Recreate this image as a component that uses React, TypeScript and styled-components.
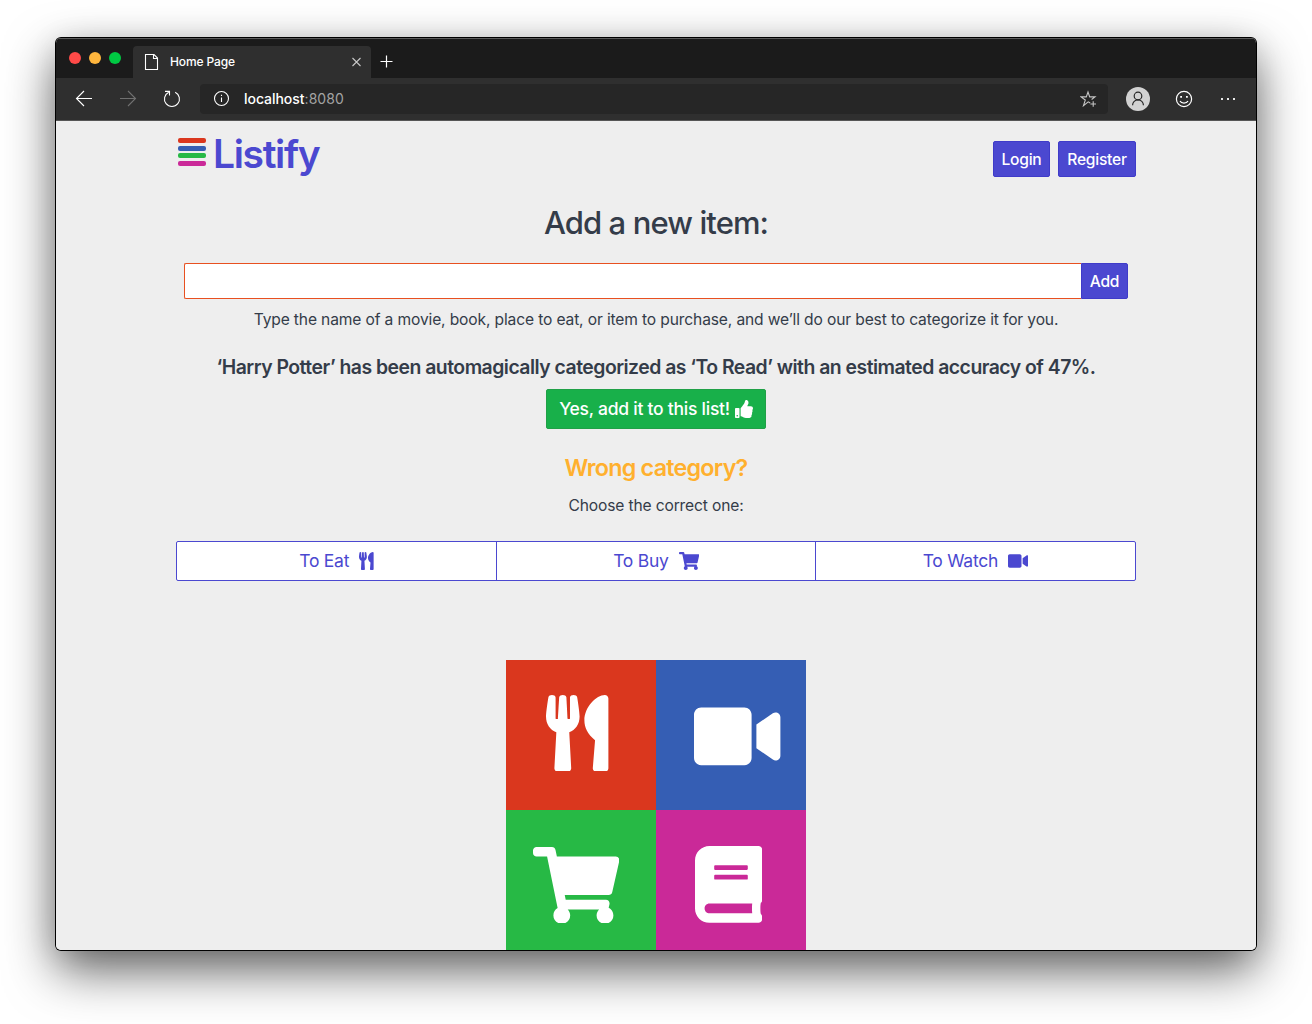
import React from "react";
import styled, { createGlobalStyle } from "styled-components";
import { FaUtensils, FaVideo, FaShoppingCart, FaBook, FaThumbsUp } from "react-icons/fa";

const GlobalStyle = createGlobalStyle`
  *, *::before, *::after { box-sizing: border-box; }
  body {
    margin: 0;
    background: #fff;
    overflow: hidden;
    font-family: Inter, "Liberation Sans", sans-serif;
    font-size: 16px;
    line-height: 24px;
    color: #343c49;
    -webkit-font-smoothing: antialiased;
  }
  h1, h2, h3, p { margin: 0; }
  button { font: inherit; margin: 0; }
  svg { display: block; flex: none; }
`;

const Desktop = styled.div`
  width: 1312px;
  height: 1024px;
  padding: 38px 56px 74px;
  overflow: hidden;
`;

const BrowserWindow = styled.div`
  width: 1200px;
  height: 912px;
  display: flex;
  flex-direction: column;
  overflow: hidden;
  border-radius: 5px;
  background: #eee;
  box-shadow: 0 0 0 1px #000, 0 20px 50px rgba(0, 0, 0, 0.62), 0 4px 30px rgba(0, 0, 0, 0.1);
`;

const TabStrip = styled.div`
  flex: none;
  height: 40px;
  display: flex;
  align-items: flex-end;
  background: #1b1b1b;
  border-top: 1px solid #5b5b5b;
`;

const TrafficLights = styled.div`
  width: 77px;
  height: 39px;
  padding: 13px 0 0 13px;
  display: flex;
  gap: 8px;
`;

const Light = styled.span<{ $color: string }>`
  width: 12px;
  height: 12px;
  border-radius: 50%;
  background: ${(p) => p.$color};
`;

const Tab = styled.div`
  width: 238px;
  height: 32px;
  padding: 0 8px 0 11px;
  display: flex;
  align-items: center;
  border-radius: 4px 4px 0 0;
  background: #2f2f2f;
  color: #fff;
`;

const TabTitle = styled.span`
  flex: 1;
  margin-left: 10px;
  font-size: 12px;
  line-height: 16px;
  font-weight: 500;
  letter-spacing: -0.12px;
`;

const NewTab = styled.span`
  margin: 0 0 10px 9px;
`;

const Toolbar = styled.div`
  flex: none;
  height: 43px;
  display: flex;
  align-items: center;
  padding-left: 19px;
  background: #2f2f2f;
  border-bottom: 1px solid #565656;
`;

const NavIcons = styled.div`
  width: 125px;
  display: flex;
  gap: 26px;
`;

const AddressBar = styled.div`
  width: 908px;
  height: 30px;
  padding: 0 10px 0 12px;
  display: flex;
  align-items: center;
  border-radius: 4px;
  background: #262626;
`;

const Address = styled.span`
  flex: 1;
  margin-left: 14px;
  color: #a3a3a3;
  font-size: 14px;
  line-height: 20px;
  letter-spacing: 0.08px;
`;

const Host = styled.span`
  color: #fff;
  font-weight: 500;
  letter-spacing: -0.04px;
`;

const ToolbarActions = styled.div`
  margin-left: 18px;
  display: flex;
  align-items: center;
  gap: 24px;
`;

const Page = styled.main`
  flex: 1;
  min-height: 0;
  overflow: hidden;
  padding: 0 120px;
  display: flex;
  flex-direction: column;
  align-items: center;
  background: #eee;
`;

const Header = styled.header`
  flex: none;
  align-self: stretch;
  display: flex;
  justify-content: space-between;
  height: 56px;
`;

const Brand = styled.div`
  display: flex;
  padding: 17px 0 0 2px;
`;

const Bars = styled.div`
  display: flex;
  flex-direction: column;
  gap: 2.67px;
  width: 28px;
`;

const Bar = styled.span<{ $color: string }>`
  height: 5px;
  border-radius: 2px;
  background: ${(p) => p.$color};
`;

const BrandName = styled.h1`
  margin: -8px 0 0 7px;
  color: #4b48d0;
  font-size: 39px;
  line-height: 48px;
  font-weight: 600;
  letter-spacing: -1.35px;
`;

const Account = styled.div`
  display: flex;
  gap: 8px;
  padding-top: 20px;
`;

const Button = styled.button<{ $width: number }>`
  width: ${(p) => p.$width}px;
  height: 36px;
  padding: 1px 0 0;
  border: 1px solid #3f3bc9;
  border-radius: 2px;
  background: #4b48d0;
  color: #fff;
  font-size: 15.6px;
  line-height: 24px;
  font-weight: 500;
  letter-spacing: -0.26px;
  white-space: nowrap;
`;

const AddButton = styled(Button)`
  border-radius: 0 2px 2px 0;
`;

const Title = styled.h2`
  margin-top: 27px;
  font-size: 31px;
  line-height: 38px;
  font-weight: 550;
  letter-spacing: -0.9px;
`;

const ItemForm = styled.div`
  width: 944px;
  margin-top: 21px;
  display: flex;
`;

const ItemInput = styled.input`
  flex: 1;
  height: 36px;
  padding: 0 8px;
  border: 1px solid #e85020;
  border-right: 0;
  border-radius: 2px 0 0 2px;
  background: #fff;
  outline: 0;
  font: inherit;
`;

const Hint = styled.p<{ $top: number }>`
  margin-top: ${(p) => p.$top}px;
  font-size: 15.6px;
  white-space: nowrap;
  letter-spacing: -0.14px;
`;

const Result = styled.h3`
  margin-top: 23px;
  font-size: 19.4px;
  line-height: 24px;
  font-weight: 600;
  letter-spacing: -0.51px;
  white-space: nowrap;
`;

const ConfirmButton = styled.button`
  flex: none;
  width: 220px;
  height: 40px;
  margin-top: 10px;
  padding: 0;
  display: flex;
  align-items: center;
  justify-content: center;
  gap: 5px;
  border: 1px solid #20a047;
  border-radius: 2px;
  background: #18b04a;
  color: #fff;
  font-size: 17.5px;
  font-weight: 500;
  letter-spacing: -0.25px;
  white-space: nowrap;
`;

const Warning = styled.h3`
  margin-top: 25px;
  color: #ffb02e;
  font-size: 23.3px;
  line-height: 28px;
  font-weight: 600;
  letter-spacing: -0.75px;
`;

const Categories = styled.div`
  align-self: stretch;
  height: 40px;
  flex: none;
  margin-top: 23px;
  display: grid;
  grid-template-columns: 319px 319px 320px;
  border: 1px solid #4b48d0;
  border-radius: 2px;
  background: #fff;
  overflow: hidden;
`;

const Category = styled.button<{ $ratio: number }>`
  display: flex;
  align-items: center;
  justify-content: center;
  gap: 10px;
  padding: 0 0 1px;
  border: 0;
  background: transparent;
  color: #4b48d0;
  font-size: 17.5px;
  letter-spacing: -0.25px;
  & + & { border-left: 1px solid #4b48d0; }
  svg { width: ${(p) => p.$ratio * 18}px; height: 18px; }
`;

const Tiles = styled.div`
  flex: none;
  margin-top: 79px;
  display: grid;
  grid-template-columns: 150px 150px;
  grid-auto-rows: 150px;
`;

const Tile = styled.div<{ $color: string; $left: number; $top: number; $ratio: number }>`
  padding: ${(p) => p.$top}px 0 0 ${(p) => p.$left}px;
  background: ${(p) => p.$color};
  color: #fff;
  svg { width: ${(p) => p.$ratio * 76.8}px; height: 76.8px; }
`;

function Line({ children, size = 18, color = "#fff", width = 1.1 }: { children: React.ReactNode; size?: number; color?: string; width?: number }) {
  return (
    <svg width={size} height={size} viewBox={`0 0 ${size} ${size}`} fill="none" stroke={color} strokeWidth={width}>
      {children}
    </svg>
  );
}

function BrowserChrome() {
  return (
    <>
      <TabStrip>
        <TrafficLights>
          <Light $color="#ff4a48" />
          <Light $color="#ffb63d" />
          <Light $color="#00c943" />
        </TrafficLights>
        <Tab>
          <Line size={16} width={1.1}>
            <path d="M1.5 0.5H10L13.5 4V15.5H1.5ZM9.5 0.5V4.5H13.5" />
          </Line>
          <TabTitle>Home Page</TabTitle>
          <Line size={12} color="#c8c8c8"><path d="M1.5 2L9.5 10M9.5 2L1.5 10" /></Line>
        </Tab>
        <NewTab><Line size={13} width={1.2}><path d="M6.5 0.5V12.5M0.5 6.5H12.5" /></Line></NewTab>
      </TabStrip>
      <Toolbar>
        <NavIcons>
          <Line><path d="M17 8.5H1.5M9 1L1.5 8.5L9 16" /></Line>
          <Line color="#707070"><path d="M1 8.5H16.5M9 1L16.5 8.5L9 16" /></Line>
          <Line><path d="M5.7 2.2A7.5 7.5 0 1 0 12.2 2.2M2 1.4H6.5V5.6" /></Line>
        </NavIcons>
        <AddressBar>
          <Line>
            <circle cx="9.5" cy="8.5" r="7" />
            <path d="M9.5 7.5V12M9.5 4.8V6" />
          </Line>
          <Address><Host>localhost</Host>:8080</Address>
          <Line color="#c5c5c5">
            <path d="M10.2 13L8.2 11.8L3.5 15.6L5.3 10L1 6.9H6.3L8 2L9.7 6.9H15L11.6 9.5M13.2 11.2V16.8M10.4 14H16" />
          </Line>
        </AddressBar>
        <ToolbarActions>
          <svg width="24" height="24" viewBox="0 0 24 24" fill="none">
            <circle cx="12" cy="12" r="12" fill="#d2d2d2" />
            <circle cx="12" cy="9" r="3.8" stroke="#262626" strokeWidth="1.2" />
            <path d="M6.6 18.2V18A5.4 5.2 0 0 1 17.4 18V18.2" stroke="#262626" strokeWidth="1.2" />
          </svg>
          <svg width="20" height="20" viewBox="0 0 20 20" fill="none" stroke="#fff" strokeWidth="1.2">
            <circle cx="10" cy="10" r="7.6" />
            <path d="M6 12C7.4 14.8 12.6 14.8 14 12" />
            <path d="M6.2 7.8H8M12 7.8H13.8" strokeWidth="1.8" />
          </svg>
          <svg width="20" height="20" viewBox="0 0 20 20" fill="#e8e8e8">
            <path d="M3 9h2v2H3zM9 9h2v2H9zM15 9h2v2H15z" />
          </svg>
        </ToolbarActions>
      </Toolbar>
    </>
  );
}

export default function App() {
  return (
    <>
      <GlobalStyle />
      <Desktop>
        <BrowserWindow>
          <BrowserChrome />
          <Page>
            <Header>
              <Brand>
                <Bars>
                  <Bar $color="#da371e" />
                  <Bar $color="#355eb4" />
                  <Bar $color="#27b945" />
                  <Bar $color="#ca2998" />
                </Bars>
                <BrandName>Listify</BrandName>
              </Brand>
              <Account>
                <Button $width={57}>Login</Button>
                <Button $width={78}>Register</Button>
              </Account>
            </Header>
            <Title>Add a new item:</Title>
            <ItemForm>
              <ItemInput aria-label="Item" />
              <AddButton $width={47}>Add</AddButton>
            </ItemForm>
            <Hint $top={9}>
              Type the name of a movie, book, place to eat, or item to purchase, and we’ll do our best to categorize it for you.
            </Hint>
            <Result>‘Harry Potter’ has been automagically categorized as ‘To Read’ with an estimated accuracy of 47%.</Result>
            <ConfirmButton>
              Yes, add it to this list! <FaThumbsUp size={18} />
            </ConfirmButton>
            <Warning>Wrong category?</Warning>
            <Hint $top={12}>Choose the correct one:</Hint>
            <Categories>
              <Category $ratio={0.8125}>To Eat <FaUtensils /></Category>
              <Category $ratio={1.125}>To Buy <FaShoppingCart /></Category>
              <Category $ratio={1.125}>To Watch <FaVideo /></Category>
            </Categories>
            <Tiles>
              <Tile $color="#da371e" $left={40.3} $top={34.5} $ratio={0.8125}><FaUtensils /></Tile>
              <Tile $color="#355eb4" $left={38.3} $top={37.6} $ratio={1.125}><FaVideo /></Tile>
              <Tile $color="#27b945" $left={26.9} $top={36.7} $ratio={1.125}><FaShoppingCart /></Tile>
              <Tile $color="#ca2998" $left={38.7} $top={36.2} $ratio={0.875}><FaBook /></Tile>
            </Tiles>
          </Page>
        </BrowserWindow>
      </Desktop>
    </>
  );
}
